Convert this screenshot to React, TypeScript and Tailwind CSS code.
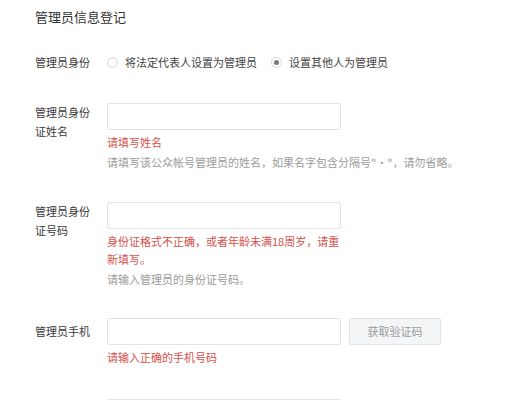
const font = { fontFamily: '"Noto Sans CJK SC", "Noto Sans", sans-serif' };

function Radio({ checked, label }: { checked?: boolean; label: string }) {
  return (
    <label className="flex items-center">
      <span className="w-[11px] h-[11px] rounded-full border border-[#d6d6d6] bg-white flex items-center justify-center">
        {checked && <span className="w-[5px] h-[5px] rounded-full bg-[#7a7a7a]" />}
      </span>
      <span className="ml-[7px] text-[11px] leading-[20px] text-[#444]">{label}</span>
    </label>
  );
}

function Input() {
  return <div className="w-[234px] h-[27px] border border-[#e3e3e3] rounded-[2px] bg-white" />;
}

function Error({ children }: { children: React.ReactNode }) {
  return <div className="w-[234px] mt-[3px] text-[11px] leading-[18px] text-[#d5504c]">{children}</div>;
}

function Hint({ children }: { children: React.ReactNode }) {
  return <div className="mt-[2px] text-[11px] leading-[18px] text-[#9b9b9b] whitespace-nowrap">{children}</div>;
}

export default function App() {
  return (
    <div className="min-h-screen bg-white pl-[35px] pt-[8px] overflow-hidden" style={font}>
      <div className="text-[13px] leading-[18px] text-[#333]">管理员信息登记</div>

      {/* 管理员身份 */}
      <div className="flex items-center mt-[26px]">
        <div className="w-[72px] text-[11px] leading-[20px] text-[#3a3a3a]">管理员身份</div>
        <Radio label="将法定代表人设置为管理员" />
        <div className="ml-[14px]">
          <Radio checked label="设置其他人为管理员" />
        </div>
      </div>

      {/* 姓名 */}
      <div className="flex mt-[31px]">
        <div className="w-[60px] mr-[12px] text-[11px] leading-[19px] text-[#3a3a3a]">管理员身份证姓名</div>
        <div>
          <Input />
          <Error>请填写姓名</Error>
          <Hint>请填写该公众帐号管理员的姓名，如果名字包含分隔号"·"，请勿省略。</Hint>
        </div>
      </div>

      {/* 证件号 */}
      <div className="flex mt-[31px]">
        <div className="w-[60px] mr-[12px] text-[11px] leading-[19px] text-[#3a3a3a]">管理员身份证号码</div>
        <div>
          <Input />
          <Error>身份证格式不正确，或者年龄未满18周岁，请重新填写。</Error>
          <Hint>请输入管理员的身份证号码。</Hint>
        </div>
      </div>

      {/* 手机 */}
      <div className="flex mt-[30px]">
        <div className="w-[72px] h-[27px] flex items-center text-[11px] text-[#3a3a3a]">管理员手机</div>
        <div>
          <div className="flex">
            <Input />
            <button className="ml-[8px] w-[92px] h-[27px] border border-[#e2e2e2] rounded-[2px] bg-[#f4f5f6] text-[11px] text-[#9a9a9a]">
              获取验证码
            </button>
          </div>
          <Error>请输入正确的手机号码</Error>
        </div>
      </div>

      {/* 下一行（被截断） */}
      <div className="flex mt-[33px]">
        <div className="w-[72px] h-[27px]" />
        <Input />
      </div>
    </div>
  );
}
